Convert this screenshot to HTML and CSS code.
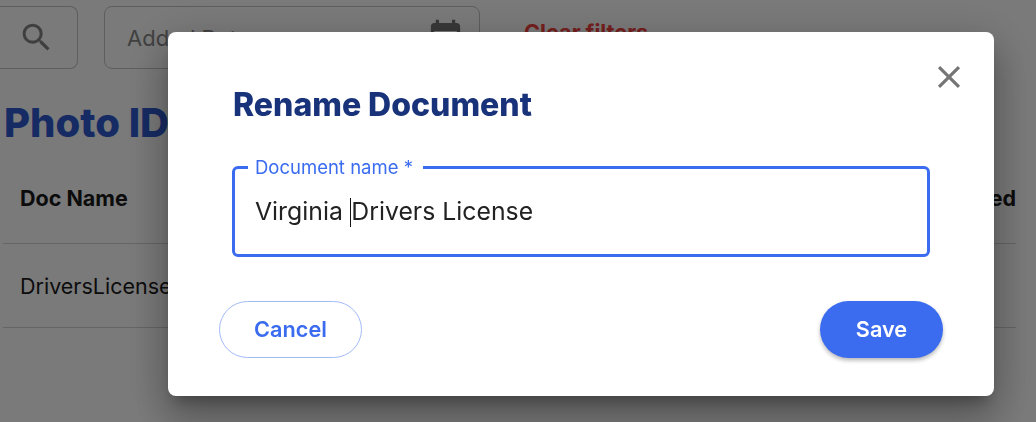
FILE: index.html
```html
<!DOCTYPE html>
<html lang="en">
<head>
<meta charset="utf-8">
<title>Rename Document</title>
<link rel="stylesheet" href="styles.css">
</head>
<body>
<main class="page">
  <div class="filters">
    <button class="search-btn" aria-label="Search">
      <svg width="37" height="37" viewBox="0 0 24 24"><path fill="#858585" d="M15.5 14h-.79l-.28-.27A6.47 6.47 0 0 0 16 9.5 6.5 6.5 0 1 0 9.5 16c1.61 0 3.09-.59 4.23-1.57l.27.28v.79l5 4.99L20.49 19l-4.99-5zm-6 0C7.01 14 5 11.99 5 9.5S7.01 5 9.5 5 14 7.01 14 9.5 11.99 14 9.5 14z"/></svg>
    </button>
    <div class="date-field">
      <span>Added Date</span>
      <svg width="39" height="39" viewBox="0 0 24 24"><path fill="#757575" d="M19 3h-1V1h-2v2H8V1H6v2H5c-1.1 0-2 .9-2 2v14c0 1.1.9 2 2 2h14c1.1 0 2-.9 2-2V5c0-1.1-.9-2-2-2zm0 16H5V8h14v11z"/></svg>
    </div>
    <a class="clear">Clear filters</a>
  </div>
  <h1 class="page-title">Photo ID</h1>
  <div class="table">
    <div class="row head"><span>Doc Name</span><span>Added</span></div>
    <div class="row"><span>DriversLicense.pdf</span></div>
  </div>
</main>
<div class="backdrop">
  <section class="dialog">
    <button class="close" aria-label="Close">
      <svg width="38" height="38" viewBox="0 0 24 24"><path fill="#757575" d="M19 6.41 17.59 5 12 10.59 6.41 5 5 6.41 10.59 12 5 17.59 6.41 19 12 13.41 17.59 19 19 17.59 13.41 12z"/></svg>
    </button>
    <h2 class="dialog-title">Rename Document</h2>
    <fieldset class="field">
      <legend>Document name *</legend>
      <div class="value">Virginia <i class="caret"></i>Drivers License</div>
    </fieldset>
    <div class="actions">
      <button class="btn cancel">Cancel</button>
      <button class="btn save">Save</button>
    </div>
  </section>
</div>
</body>
</html>
```
FILE: styles.css
```css
* { box-sizing: border-box; }
html, body { margin: 0; height: 100%; overflow: hidden; }
body { background: #fff; font-family: Inter, "Liberation Sans", sans-serif; color: #1a1a1a; }
button { font-family: inherit; }

.page { width: 1036px; height: 422px; overflow: hidden; padding-top: 6px; }
.filters { display: flex; align-items: flex-start; height: 63px; }
.search-btn { width: 78px; height: 63px; padding: 0 0 0 18px; background: none; border: 1px solid #c4c4c4; border-left: 0; border-radius: 0 8px 8px 0; display: flex; align-items: center; justify-content: flex-start; }
.date-field { width: 376px; height: 63px; margin-left: 26px; padding: 0 14px 0 22px; border: 1px solid #c4c4c4; border-radius: 8px; display: flex; align-items: center; justify-content: space-between; font-size: 22px; color: #888; }
.clear { margin: 14px 0 0 44px; font-size: 21.7px; line-height: 25px; font-weight: 700; color: #f54040; }
.page-title { margin: 32px 0 0 4px; font-size: 40px; line-height: 44px; font-weight: 800; color: #2f5bd0; }
.table { margin: 18px 20px 0 3px; }
.row { display: flex; justify-content: space-between; padding: 0 0 0 17px; height: 84px; align-items: center; border-bottom: 1px solid #d4d4d4; font-size: 21.5px; }
.row.head { height: 81px; padding-bottom: 11px; font-weight: 700; }

.backdrop { position: fixed; inset: 0; background: rgba(0,0,0,.52); }
.dialog { position: absolute; left: 168px; top: 32px; width: 826px; height: 364px; background: #fff; border-radius: 8px; padding: 55px 51px 0 64px; box-shadow: 0 11px 15px -7px rgba(0,0,0,.3), 0 24px 38px 3px rgba(0,0,0,.2), 0 9px 46px 8px rgba(0,0,0,.14); }
.close { position: absolute; right: 26px; top: 26px; width: 38px; height: 38px; padding: 0; border: 0; background: none; }
.dialog-title { margin: 0 0 0 1px; font-size: 32px; line-height: 36px; font-weight: 800; color: #19337a; }
.field { margin: 34px 13px 0 0; padding: 0 20px; height: 100px; border: 3px solid #3b6cf0; border-radius: 6px; min-width: 0; }
.field legend { padding: 0 10px 0 7px; margin-left: -7px; font-size: 18.5px; line-height: 20px; color: #3b6cf0; }
.value { font-size: 24.8px; line-height: 32px; margin-top: 18px; color: #222; white-space: pre; }
.caret { display: inline-block; width: 1.5px; height: 29px; background: #111; vertical-align: -7px; }
.actions { display: flex; justify-content: space-between; margin: 44px 0 0 -13px; }
.btn { height: 57px; padding-bottom: 3px; border-radius: 29px; font-size: 21.7px; font-weight: 600; }
.cancel { width: 143px; background: #fff; border: 1px solid #a3bcf7; color: #3b6cf0; }
.save { width: 123px; background: #3b6cf0; border: 0; color: #fff; box-shadow: 0 3px 5px -1px rgba(0,0,0,.2), 0 2px 4px rgba(0,0,0,.14); }
```
